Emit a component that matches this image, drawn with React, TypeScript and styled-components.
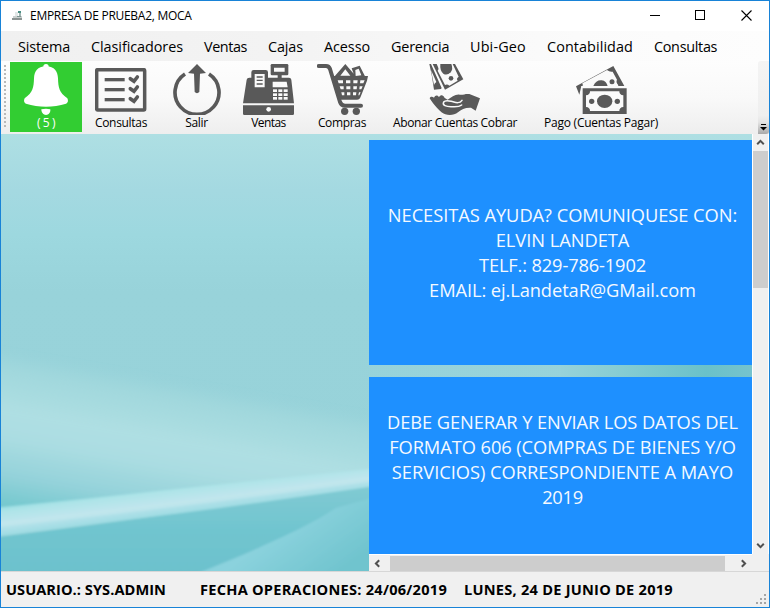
import React from 'react';
import styled, { createGlobalStyle } from 'styled-components';

const INK = '#595959';

const GlobalStyle = createGlobalStyle`
  * { box-sizing: border-box; }
  body { margin: 0; font-family: "Open Sans", "Noto Sans", sans-serif; color: #000; }
`;

const Window = styled.div`
  width: 770px;
  height: 608px;
  display: grid;
  grid-template-rows: 30px 30px 73px 437px 36px;
  border: 1px solid #1883d7;
  background: #f0f0f0;
  overflow: hidden;
`;

const Label = styled.span<{ $ls?: number }>`
  letter-spacing: ${p => p.$ls ?? 0}px;
  white-space: nowrap;
`;

const TitleBar = styled.header`
  display: flex;
  align-items: center;
  background: #fff;
  padding: 0 1px 1px 10px;
  font-size: 12px;
`;

const TitleText = styled(Label)`
  flex: 1;
  margin-left: 6px;
`;

const Caption = styled.span`
  width: 45px;
  display: flex;
  justify-content: center;
  &:last-child { padding-left: 1px; }
`;

const MenuBar = styled.nav`
  display: flex;
  align-items: center;
  padding-left: 17px;
  font-size: 14.4px;
  background: linear-gradient(90deg, #f0f0f0, #f3f3f3 35%, #fbfbfb 75%, #fdfdfd);
`;

const MenuItem = styled(Label)<{ $w: number }>`
  width: ${p => p.$w}px;
  margin-right: 21px;
  padding-top: 1px;
`;

const ToolBar = styled.div`
  display: flex;
  background: linear-gradient(#fdfdfd, #f9f9f9 50%, #eeeeee);
  padding-left: 3px;
  border-radius: 0 0 0 3px;
`;

const Gripper = styled.div`
  width: 2px;
  height: 63px;
  margin: 4px 4px 0 0;
  background: repeating-linear-gradient(#b9b9b9 0 2px, transparent 2px 4px);
`;

const ToolButton = styled.button<{ $w: number; $active?: boolean }>`
  width: ${p => p.$w}px;
  height: 70px;
  margin-top: 1px;
  padding: 2px 0 0;
  border: 0;
  display: flex;
  flex-direction: column;
  align-items: center;
  font: 12px "Open Sans", sans-serif;
  line-height: 16px;
  color: ${p => (p.$active ? '#fff' : '#000')};
  background: ${p => (p.$active ? '#32cd32' : 'transparent')};
`;

const IconBox = styled.span`
  height: 51px;
  display: flex;
  align-items: center;
`;

const Overflow = styled.div`
  width: 11px;
  margin-left: auto;
  display: flex;
  align-items: flex-end;
  justify-content: center;
  padding-bottom: 3px;
  border-radius: 3px 0 3px 0;
  background: linear-gradient(#f4f4f4, #efefef 75%, #e4e4e4 84%, #a9a9a9);
`;

const Workspace = styled.main`
  display: flex;
  justify-content: flex-end;
  position: relative;
  overflow: hidden;
`;

const Wallpaper = styled.svg`
  position: absolute;
  inset: 0;
`;

const Notices = styled.section`
  position: relative;
  width: 400px;
  display: grid;
  grid-template-columns: 383px 17px;
  grid-template-rows: 420px 17px;
`;

const CardList = styled.div`
  display: flex;
  flex-direction: column;
  gap: 12px;
  padding-top: 6px;
  overflow: hidden;
`;

const Card = styled.article<{ $h: number; $pad: number }>`
  flex: none;
  height: ${p => p.$h}px;
  padding-top: ${p => p.$pad}px;
  background: #1e90ff;
  color: #f4f9ff;
  font-size: 18.3px;
  line-height: 25px;
  display: flex;
  flex-direction: column;
  align-items: center;
  padding-left: 4px;
`;

const VScroll = styled.div`
  display: flex;
  flex-direction: column;
  align-items: center;
  border-left: 1px solid #fff;
  border-right: 1px solid #fff;
  background: #f0f0f0;
`;

const VThumb = styled.div`
  width: 100%;
  height: 137px;
  background: #cdcdcd;
`;

const HScroll = styled.div`
  display: flex;
  align-items: center;
  justify-content: space-between;
  border-top: 1px solid #fff;
  background: #f0f0f0;
`;

const HThumb = styled.div`
  width: 335px;
  height: 15px;
  margin-left: 4px;
  margin-right: auto;
  background: #cdcdcd;
`;

const ArrowBox = styled.span<{ $w: number; $h: number }>`
  width: ${p => p.$w}px;
  height: ${p => p.$h}px;
  display: flex;
  align-items: center;
  justify-content: center;
`;

const Spacer = styled.div`
  flex: 1;
`;

const Corner = styled.div`
  background: #f0f0f0;
`;

const StatusBar = styled.footer`
  display: flex;
  align-items: center;
  border-top: 1px solid #d7d7d7;
  padding: 0 0 2px 5px;
  font-size: 14.6px;
  font-weight: 700;
`;

const StatusItem = styled(Label)<{ $w: number }>`
  width: ${p => p.$w}px;
`;

const SizeGrip = styled.svg`
  align-self: flex-end;
  margin: 0 2px 0 auto;
`;

const BellIcon = () => (
  <svg width="44" height="51" viewBox="71 27 132 153" fill="#fff">
    <circle cx="137" cy="35" r="8" />
    <path d="M137 34c-26 0-35 15-36 36-1 28-3 42-28 60-4 9-1 14 4 16 38 12 82 12 120 0 5-2 8-7 4-16-25-18-27-32-28-60-1-21-10-36-36-36z" />
    <path d="M123 163q14-4 27 0c1 10-5 17-13 17s-14-7-14-17z" />
  </svg>
);

const ListIcon = () => (
  <svg width="52" height="44" viewBox="285 38 156 132">
    <rect x="290" y="43" width="144" height="121" rx="3" fill="none" stroke={INK} strokeWidth="10.5" />
    {[73, 103, 133].map(y => (
      <g key={y} stroke={INK} fill="none">
        <path d={`M314 ${y}h60`} strokeWidth="10" />
        <path d={`M391 ${y - 3}l11 8 10-13`} strokeWidth="11" strokeLinecap="round" />
      </g>
    ))}
  </svg>
);

const PowerIcon = () => (
  <svg width="48" height="51" viewBox="68 27 144 153">
    <path d="M104 54A66 66 0 1 0 176 54" fill="none" stroke={INK} strokeWidth="11" transform="translate(0 3)" />
    <path d="M140 27l27 27-18 2-2 55q-7 7-14 0l-2-55-18-2z" fill={INK} />
  </svg>
);

const RegisterIcon = () => (
  <svg width="51" height="51" viewBox="39 27 153 153">
    <g fill={INK}>
      <path d="M50 74q1-6 8-6h6V52q0-7 7-7h36q7 0 7 7v16h63q6 0 7 6l8 71H39z" />
      <path d="M126 27h45q4 0 4 4v26q0 4-4 4h-45q-4 0-4-4V31q0-4 4-4z" />
      <path d="M143 58h12v12h-12zM39 151h153v25q0 4-4 4H43q-4 0-4-4z" />
    </g>
    <g fill="#fafafa">
      <path d="M132 38h32v12h-32zM74 57h30v40H74zM128 80h42l3 17h-45z" />
      {[103, 115, 126].map(y =>
        [129, 145, 161].map(x => <rect key={`${x}-${y}`} x={x} y={y} width="12" height="8" />),
      )}
      <circle cx="116" cy="163" r="7" />
    </g>
    <path d="M80 66h18M80 76h18M80 87h18" stroke={INK} strokeWidth="4" />
  </svg>
);

const CartIcon = () => (
  <svg width="51" height="51" viewBox="258 27 153 153">
    <path d="M263 33h22q9 0 12 9l30 99q4 11 15 11h48" fill="none" stroke={INK} strokeWidth="12" strokeLinecap="round" strokeLinejoin="round" />
    <path d="M308 63h103l-3 14-19 48q-3 9-11 9h-54z" fill={INK} />
    <path d="M311 64l32-37 25 29-6-16 24-8 16 32z" fill={INK} />
    <g fill="#fafafa">
      <path d="M328 62l15-19 15 19zM373 45l10-4 8 20-17 2z" />
      <path d="M320 76h16v9h-13zM345 76h13v9h-13zM367 76h13l-1 9h-12zM388 76h13l-4 9h-10z" />
      <path d="M326 94h12v9h-9zM346 94h12v9h-12zM367 94h11l-1 9h-10zM386 94h9l-4 9h-6z" />
      <path d="M331 112h9v9h-7zM348 112h10v9h-10zM366 112h10l-1 9h-9zM384 112h5l-4 9h-3z" />
    </g>
    <circle cx="341" cy="169" r="11" fill={INK} />
    <circle cx="376" cy="169" r="11" fill={INK} />
  </svg>
);

const HandIcon = () => (
  <svg width="53" height="51" viewBox="147 27 159 153">
    <path d="M148 27h5l32 72-2 3-21 2-7-45z" fill={INK} />
    <path d="M153 45l16 36q-6 4-7 9z" fill="#fafafa" />
    <path d="M158 27h67l25 46-55 31z" fill={INK} />
    <path d="M170 27h48l18 38q-8 5-3 12l-25 15q-6-6-13-2l-22-43q5-4 1-11z" fill="#fafafa" />
    <path d="M181 27h33q6 15-2 25-11 11-22 4-11-9-9-29z" fill={INK} />
    <circle cx="213" cy="70" r="7" fill={INK} />
    <path d="M149 130c3-7 9-5 13-2 4-9 11-8 15-2 6-8 13-6 17 3 4 2 7 5 9 5 11-7 23-17 36-15 12 1 15-3 29-2l32 13-13 37-14-9c-17-1-29 5-39 14-10 8-25 10-38 6-13-3-37-31-47-48z" fill={INK} />
    <path d="M246 136c-7 10-17 7-27 4-10-2-22-7-28 1-5 10 8 14 22 14 12 0 23 2 32-5" fill="none" stroke="#fafafa" strokeWidth="4.500" strokeLinecap="round" />
  </svg>
);

const MoneyIcon = () => (
  <svg width="51" height="48" viewBox="138 36 153 144">
    <path d="M138 97L250 36l33 60H154l-6 26z" fill={INK} />
    <path d="M157 98q3-5 0-10l74-40q8 7 17 5l13 24q-4 8 3 15l2 7H157z" fill="#fafafa" />
    <path d="M190 96c5-12 14-18 25-17 10 1 15 8 18 17z" fill={INK} />
    <circle cx="246" cy="83" r="7.500" fill={INK} />
    <path d="M154 97h137v8H154z" fill="#fafafa" />
    <path d="M158 103h132v77H158z" fill={INK} />
    <path d="M180 112h88q0 11 12 12v35q-12 1-12 12h-88q0-11-12-12v-35q12-1 12-12z" fill="#fafafa" />
    <ellipse cx="224" cy="142" rx="23" ry="20" fill={INK} />
    <circle cx="185" cy="142" r="8" fill={INK} />
    <circle cx="262" cy="142" r="8" fill={INK} />
  </svg>
);

const AppIcon = () => (
  <svg width="13" height="12" viewBox="0 0 13 12">
    <path d="M4 2h3v4H4z" fill="#e3e8e8" />
    <path d="M7 1h3v2H7z" fill="#4a8f84" />
    <path d="M8 3h2v3H8z" fill="#9fb4b1" />
    <path d="M2 6h9v2H2z" fill="#cbd1d0" />
    <path d="M6 6h4v1H6z" fill="#7e9693" />
    <path d="M1 8h10v2H1z" fill="#8c9493" />
  </svg>
);

const ROTATION = { up: 0, right: 90, down: 180, left: 270 };

const Chevron = ({ dir }: { dir: keyof typeof ROTATION }) => (
  <svg width="9" height="9" viewBox="0 0 9 9">
    <path d="M1.200 6.200L4.500 2.900l3.300 3.300" fill="none" stroke="#505050" strokeWidth="2" transform={`rotate(${ROTATION[dir]} 4.500 4.500)`} />
  </svg>
);

const Artwork = () => (
  <Wallpaper width="768" height="437" viewBox="0 0 768 437" preserveAspectRatio="none">
    <defs>
      <linearGradient id="sky" x1="0" y1="0" x2="0" y2="1">
        <stop offset="0" stopColor="#aedfe3" />
        <stop offset=".13" stopColor="#a4d9e1" />
        <stop offset=".23" stopColor="#9dd8df" />
        <stop offset=".36" stopColor="#98d3da" />
        <stop offset="1" stopColor="#97d2d9" />
      </linearGradient>
      <linearGradient id="mist" gradientUnits="userSpaceOnUse" x1="0" y1="218" x2="-26" y2="366">
        <stop offset="0" stopColor="#a7dbdf" stopOpacity="0" />
        <stop offset=".12" stopColor="#a5dade" stopOpacity=".75" />
        <stop offset=".38" stopColor="#afdfe3" />
        <stop offset=".55" stopColor="#abdde2" />
        <stop offset=".8" stopColor="#94d2da" />
        <stop offset="1" stopColor="#74c8ce" />
      </linearGradient>
      <linearGradient id="beam" gradientUnits="userSpaceOnUse" x1="0" y1="370" x2="4" y2="402">
        <stop offset="0" stopColor="#92dbe0" />
        <stop offset=".25" stopColor="#aee4e8" />
        <stop offset=".6" stopColor="#bfe5ed" />
        <stop offset="1" stopColor="#9bdbe2" />
      </linearGradient>
      <linearGradient id="sea" x1="0" y1="0" x2="0" y2="1">
        <stop offset="0" stopColor="#84cbd4" />
        <stop offset=".5" stopColor="#70c5cf" />
        <stop offset="1" stopColor="#6cc0cd" />
      </linearGradient>
      <linearGradient id="glow" gradientUnits="userSpaceOnUse" x1="275" y1="400" x2="315" y2="455">
        <stop offset="0" stopColor="#8bd2dd" />
        <stop offset="1" stopColor="#70c4ce" />
      </linearGradient>
      <linearGradient id="ridge" x1="0" y1="0" x2="1" y2="0">
        <stop offset="0" stopColor="#97d2d9" />
        <stop offset=".25" stopColor="#88cdd3" />
        <stop offset=".7" stopColor="#6ac1c9" />
        <stop offset="1" stopColor="#7ac3cf" />
      </linearGradient>
      <filter id="soft" x="-10%" y="-10%" width="120%" height="120%">
        <feGaussianBlur stdDeviation="1.2" />
      </filter>
      <filter id="hazy" x="-10%" y="-10%" width="120%" height="120%">
        <feGaussianBlur stdDeviation="4" />
      </filter>
    </defs>
    <rect width="768" height="437" fill="url(#sky)" />
    <path d="M-20 218C90 222 230 254 400 288V366L-20 384z" fill="url(#mist)" filter="url(#hazy)" />
    <g filter="url(#soft)">
      <path d="M-10 404C120 388 250 369 400 344V450H-10z" fill="url(#sea)" />
      <path d="M195 440C260 414 310 391 335 374L400 356V450z" fill="url(#glow)" />
      <path d="M-10 374C120 362 240 347 400 332V348C250 371 120 387-10 403z" fill="url(#beam)" />
      <path d="M-10 391C120 378 250 361 400 341" fill="none" stroke="#c3e6ec" strokeWidth="5" opacity=".65" />
    </g>
    <rect x="560" y="225" width="208" height="24" fill="url(#ridge)" />
  </Wallpaper>
);

const MENU: [string, number, number][] = [
  ['Sistema', 52, -0.13],
  ['Clasificadores', 92, -0.06],
  ['Ventas', 43, -0.41],
  ['Cajas', 35, -0.11],
  ['Acesso', 46, -0.07],
  ['Gerencia', 58, -0.2],
  ['Ubi-Geo', 56, 0.16],
  ['Contabilidad', 86, 0.08],
  ['Consultas', 63, -0.3],
];

const TOOLS: { text: string; width: number; ls: number; icon: React.ReactNode; active?: boolean }[] = [
  { text: '( 5 )', width: 72, ls: -0.4, icon: <BellIcon />, active: true },
  { text: 'Consultas', width: 78, ls: -0.3, icon: <ListIcon /> },
  { text: 'Salir', width: 73, ls: -0.3, icon: <PowerIcon /> },
  { text: 'Ventas', width: 71, ls: -0.58, icon: <RegisterIcon /> },
  { text: 'Compras', width: 76, ls: -0.33, icon: <CartIcon /> },
  { text: 'Abonar Cuentas Cobrar', width: 150, ls: -0.36, icon: <HandIcon /> },
  { text: 'Pago (Cuentas Pagar)', width: 142, ls: -0.23, icon: <MoneyIcon /> },
];

const CARDS: { height: number; pad: number; lines: [string, number][] }[] = [
  {
    height: 225,
    pad: 62,
    lines: [
      ['NECESITAS AYUDA? COMUNIQUESE CON:', -0.05],
      ['ELVIN LANDETA', -0.03],
      ['TELF.: 829-786-1902', -0.15],
      ['EMAIL: ej.LandetaR@GMail.com', -0.09],
    ],
  },
  {
    height: 225,
    pad: 32,
    lines: [
      ['DEBE GENERAR Y ENVIAR LOS DATOS DEL', -0.1],
      ['FORMATO 606 (COMPRAS DE BIENES Y/O', -0.08],
      ['SERVICIOS) CORRESPONDIENTE A MAYO', -0.02],
      ['2019', -0.3],
    ],
  },
];

export default function App() {
  return (
    <>
      <GlobalStyle />
      <Window>
        <TitleBar>
          <AppIcon />
          <TitleText $ls={-0.28}>EMPRESA DE PRUEBA2, MOCA</TitleText>
          <Caption>
            <svg width="11" height="11"><path d="M0 5.500h10" stroke="#000" /></svg>
          </Caption>
          <Caption>
            <svg width="11" height="11"><rect x=".5" y=".5" width="9" height="9" fill="none" stroke="#000" /></svg>
          </Caption>
          <Caption>
            <svg width="11" height="11"><path d="M.5.5l10 10M10.500.5l-10 10" stroke="#000" strokeWidth="1.100" /></svg>
          </Caption>
        </TitleBar>

        <MenuBar>
          {MENU.map(([text, w, ls]) => (
            <MenuItem key={text} $w={w} $ls={ls}>{text}</MenuItem>
          ))}
        </MenuBar>

        <ToolBar>
          <Gripper />
          {TOOLS.map(t => (
            <ToolButton key={t.text} $w={t.width} $active={t.active}>
              <IconBox>{t.icon}</IconBox>
              <Label $ls={t.ls}>{t.text}</Label>
            </ToolButton>
          ))}
          <Overflow>
            <svg width="7" height="7"><path d="M1 .5h5" stroke="#000" /><path d="M0 3h7L3.500 6.500z" fill="#000" /></svg>
          </Overflow>
        </ToolBar>

        <Workspace>
          <Artwork />
          <Notices>
            <CardList>
              {CARDS.map(c => (
                <Card key={c.lines[0][0]} $h={c.height} $pad={c.pad}>
                  {c.lines.map(([text, ls]) => (
                    <Label key={text} $ls={ls}>{text}</Label>
                  ))}
                </Card>
              ))}
            </CardList>
            <VScroll>
              <ArrowBox $w={15} $h={17}><Chevron dir="up" /></ArrowBox>
              <VThumb />
              <Spacer />
              <ArrowBox $w={15} $h={17}><Chevron dir="down" /></ArrowBox>
            </VScroll>
            <HScroll>
              <ArrowBox $w={17} $h={15}><Chevron dir="left" /></ArrowBox>
              <HThumb />
              <ArrowBox $w={17} $h={15}><Chevron dir="right" /></ArrowBox>
            </HScroll>
            <Corner />
          </Notices>
        </Workspace>

        <StatusBar>
          <StatusItem $w={194} $ls={0.05}>USUARIO.: SYS.ADMIN</StatusItem>
          <StatusItem $w={264} $ls={0.25}>FECHA OPERACIONES: 24/06/2019</StatusItem>
          <StatusItem $w={210} $ls={0.24}>LUNES, 24 DE JUNIO DE 2019</StatusItem>
          <SizeGrip width="11" height="11" fill="#a5a5a5">
            <path d="M8 0h2v2H8zM4 4h2v2H4zM8 4h2v2H8zM0 8h2v2H0zM4 8h2v2H4zM8 8h2v2H8z" />
          </SizeGrip>
        </StatusBar>
      </Window>
    </>
  );
}
